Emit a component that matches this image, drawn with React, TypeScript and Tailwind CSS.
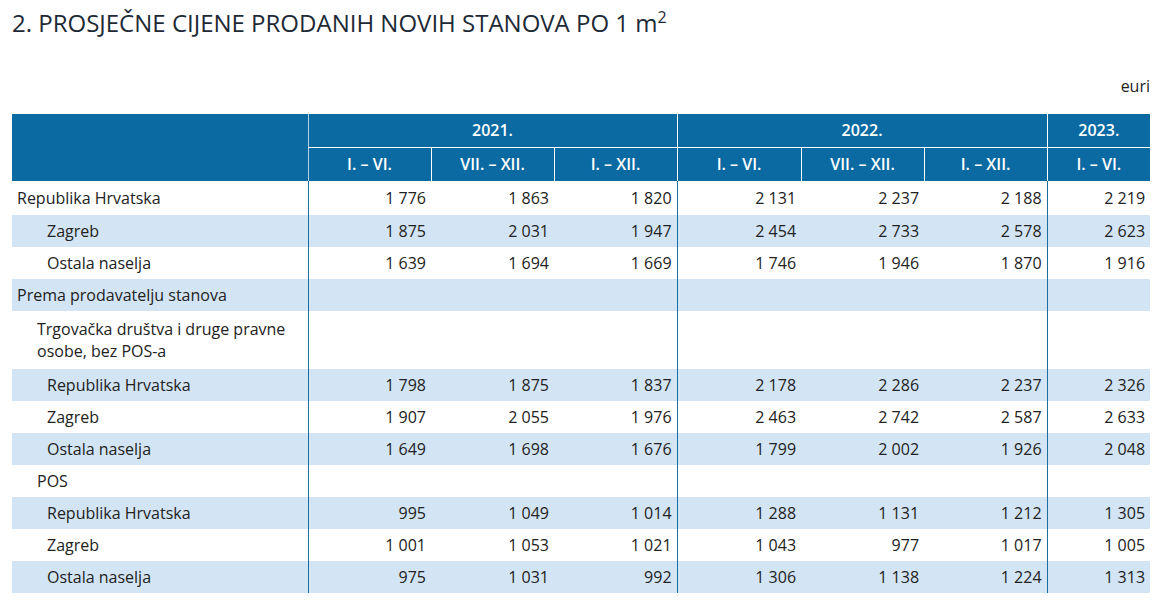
import React from "react"

type Row = {
  label: string
  indent: 0 | 1 | 2
  values?: string[]
  shade: boolean
  tall?: boolean
  first?: boolean
}

const rows: Row[] = [
  { label: "Republika Hrvatska", indent: 0, shade: false, first: true, values: ["1 776", "1 863", "1 820", "2 131", "2 237", "2 188", "2 219"] },
  { label: "Zagreb", indent: 2, shade: true, values: ["1 875", "2 031", "1 947", "2 454", "2 733", "2 578", "2 623"] },
  { label: "Ostala naselja", indent: 2, shade: false, values: ["1 639", "1 694", "1 669", "1 746", "1 946", "1 870", "1 916"] },
  { label: "Prema prodavatelju stanova", indent: 0, shade: true },
  { label: "Trgovačka društva i druge pravne osobe, bez POS-a", indent: 1, shade: false, tall: true },
  { label: "Republika Hrvatska", indent: 2, shade: true, values: ["1 798", "1 875", "1 837", "2 178", "2 286", "2 237", "2 326"] },
  { label: "Zagreb", indent: 2, shade: false, values: ["1 907", "2 055", "1 976", "2 463", "2 742", "2 587", "2 633"] },
  { label: "Ostala naselja", indent: 2, shade: true, values: ["1 649", "1 698", "1 676", "1 799", "2 002", "1 926", "2 048"] },
  { label: "POS", indent: 1, shade: false },
  { label: "Republika Hrvatska", indent: 2, shade: true, values: ["995", "1 049", "1 014", "1 288", "1 131", "1 212", "1 305"] },
  { label: "Zagreb", indent: 2, shade: false, values: ["1 001", "1 053", "1 021", "1 043", "977", "1 017", "1 005"] },
  { label: "Ostala naselja", indent: 2, shade: true, values: ["975", "1 031", "992", "1 306", "1 138", "1 224", "1 313"] },
]

const periods = ["I. – VI.", "VII. – XII.", "I. – XII.", "I. – VI.", "VII. – XII.", "I. – XII.", "I. – VI."]

// columns that start a new year group get the dark rule
const groupStart = [0, 3, 6]

export default function App() {
  return (
    <div className="w-[1170px] h-[612px] bg-white text-[#222] [font-family:'Open_Sans',sans-serif]">
      <h1 className="pl-[12px] pt-[7px] text-[24px] leading-[32px] text-[#1d2a36] font-normal">
        2. PROSJEČNE CIJENE PRODANIH NOVIH STANOVA PO 1 m
        <span className="relative top-[-9px] text-[16px] leading-none">2</span>
      </h1>
      <div className="pr-[20px] pt-[37px] text-right text-[16px] leading-[20px]">euri</div>
      <table className="ml-[12px] mt-[18px] w-[1138px] table-fixed border-collapse text-[16px]">
        <colgroup>
          <col className="w-[296px]" />
          <col className="w-[123px]" />
          <col className="w-[123px]" />
          <col className="w-[123px]" />
          <col className="w-[124px]" />
          <col className="w-[123px]" />
          <col className="w-[123px]" />
          <col className="w-[103px]" />
        </colgroup>
        <thead className="bg-[#0b6aa2] text-white">
          <tr className="h-[33px]">
            <th rowSpan={2} className="border-r border-white/70"></th>
            <th colSpan={3} className="border-r border-b border-white font-semibold">2021.</th>
            <th colSpan={3} className="border-r border-b border-white font-semibold">2022.</th>
            <th className="border-b border-white font-semibold">2023.</th>
          </tr>
          <tr className="h-[34px]">
            {periods.map((p, i) => (
              <th key={i} className={`font-semibold ${i < 6 ? "border-r border-white" : ""}`}>
                {p}
              </th>
            ))}
          </tr>
        </thead>
        <tbody>
          {rows.map((r, ri) => (
            <tr
              key={ri}
              className={`${r.shade ? "bg-[#d3e5f5]" : "bg-white"} ${r.tall ? "h-[58px]" : r.first ? "h-[34px]" : "h-[32px]"}`}
            >
              <td
                className={`leading-[22px] ${r.indent === 0 ? "pl-[5px]" : r.indent === 1 ? "pl-[25px] pr-[10px]" : "pl-[35px]"}`}
              >
                {r.label}
              </td>
              {Array.from({ length: 7 }).map((_, ci) => (
                <td
                  key={ci}
                  className={`text-right pr-[5px] ${groupStart.includes(ci) ? "border-l border-[#1a6e9e]" : ""}`}
                >
                  {r.values ? r.values[ci] : ""}
                </td>
              ))}
            </tr>
          ))}
        </tbody>
      </table>
    </div>
  )
}
